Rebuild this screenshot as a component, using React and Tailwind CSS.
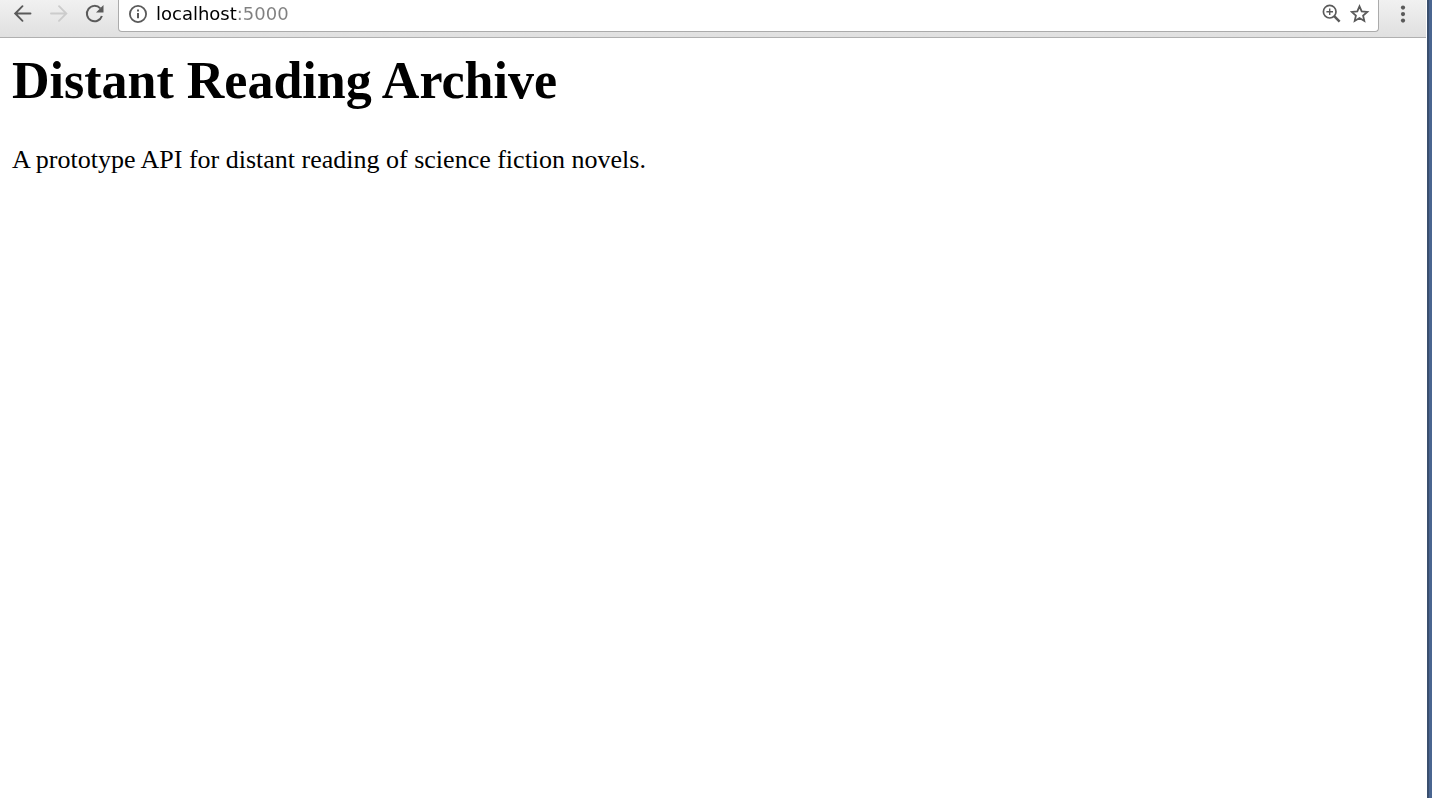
function BackIcon() {
  return (
    <svg width="20" height="20" viewBox="0 0 20 20" fill="none" stroke="currentColor" strokeWidth="1.9" strokeLinecap="round" aria-hidden="true">
      <path d="M17.500 9.500H2.500M9.500 2.200 2.200 9.500l7.300 7.300" />
    </svg>
  );
}

function ForwardIcon() {
  return (
    <svg width="20" height="20" viewBox="0 0 20 20" fill="none" stroke="currentColor" strokeWidth="1.9" strokeLinecap="round" aria-hidden="true">
      <path d="M2 9.5h15M10 2.2l7.3 7.3-7.3 7.3" />
    </svg>
  );
}

function ReloadIcon() {
  return (
    <svg width="20" height="20" viewBox="0 0 20 20" aria-hidden="true">
      <path d="M15.3 4.4A7.7 7.7 0 1 0 16.9 12" fill="none" stroke="currentColor" strokeWidth="2" />
      <path d="M18.5 1v7.5H11z" fill="currentColor" />
    </svg>
  );
}

function InfoIcon() {
  return (
    <svg width="20" height="20" viewBox="0 0 20 20" aria-hidden="true">
      <circle cx="10" cy="10" r="8.1" fill="none" stroke="currentColor" strokeWidth="1.8" />
      <path d="M9 5.6h2v2H9zM9 9h2v5.2H9z" fill="currentColor" />
    </svg>
  );
}

function ZoomIcon() {
  return (
    <svg width="20" height="20" viewBox="0 0 20 20" fill="none" stroke="currentColor" aria-hidden="true">
      <circle cx="7.7" cy="7.7" r="6.3" strokeWidth="1.7" />
      <path d="M7.7 4.4v6.6M4.4 7.7h6.6" strokeWidth="1.4" />
      <path d="M12.2 12.2l5.4 5.4" strokeWidth="2.5" />
    </svg>
  );
}

function StarIcon() {
  return (
    <svg width="20" height="20" viewBox="0 0 20 20" fill="none" stroke="currentColor" strokeWidth="1.8" aria-hidden="true">
      <path d="M9.5 2.3l2.2 5.1 5.6.5-4.2 3.7 1.2 5.4-4.8-2.9L4.7 17l1.2-5.4L1.7 7.9l5.6-.5z" />
    </svg>
  );
}

function MenuIcon() {
  return (
    <svg width="20" height="20" viewBox="0 0 20 20" fill="currentColor" aria-hidden="true">
      <circle cx="10" cy="3.6" r="2.1" />
      <circle cx="10" cy="10.1" r="2.1" />
      <circle cx="10" cy="16.6" r="2.1" />
    </svg>
  );
}

function Toolbar() {
  return (
    <header className="flex h-[38px] items-start border-b border-[#b0b0b0] bg-linear-to-b from-[#f1f1f1] to-[#e0e0e0] text-[#5a5a5a]">
      <nav aria-label="History" className="flex h-7 items-center gap-4 px-[13px]">
        <button type="button" aria-label="Back"><BackIcon /></button>
        <button type="button" aria-label="Forward" disabled className="text-[#cccccc]"><ForwardIcon /></button>
        <button type="button" aria-label="Reload"><ReloadIcon /></button>
      </nav>
      <div className="flex h-8 grow items-start rounded-b-[4px] border-x border-b border-[#ababab] bg-white px-2">
        <div className="flex h-7 grow items-center gap-2">
          <button type="button" aria-label="Site information" className="ml-px"><InfoIcon /></button>
          <input
            type="text"
            aria-label="Address"
            defaultValue="localhost:5000"
            spellCheck={false}
            className="h-7 min-w-0 grow bg-linear-to-r from-black from-[82px] to-[#808080] to-[82px] bg-clip-text font-['DejaVu_Sans',sans-serif] text-[18px] leading-7 text-transparent caret-black outline-none"
          />
          <button type="button" aria-label="Zoom"><ZoomIcon /></button>
          <button type="button" aria-label="Bookmark this page"><StarIcon /></button>
        </div>
      </div>
      <button type="button" aria-label="Menu" className="mr-[13px] ml-[14px] h-7"><MenuIcon /></button>
    </header>
  );
}

export default function App() {
  return (
    <div className="flex min-h-screen bg-white">
      <div className="min-w-0 grow pr-px">
        <Toolbar />
        <main className="px-3 pt-[13px] font-['Liberation_Serif',serif] text-black">
          <h1 className="text-[52px] leading-[60px] font-bold">Distant Reading Archive</h1>
          <p className="mt-[34px] text-[26px] leading-[30px]">A prototype API for distant reading of science fiction novels.</p>
        </main>
      </div>
      <div className="w-[5px] shrink-0 border-l-2 border-[#3a4f6e] bg-[#4a6590]" />
    </div>
  );
}
